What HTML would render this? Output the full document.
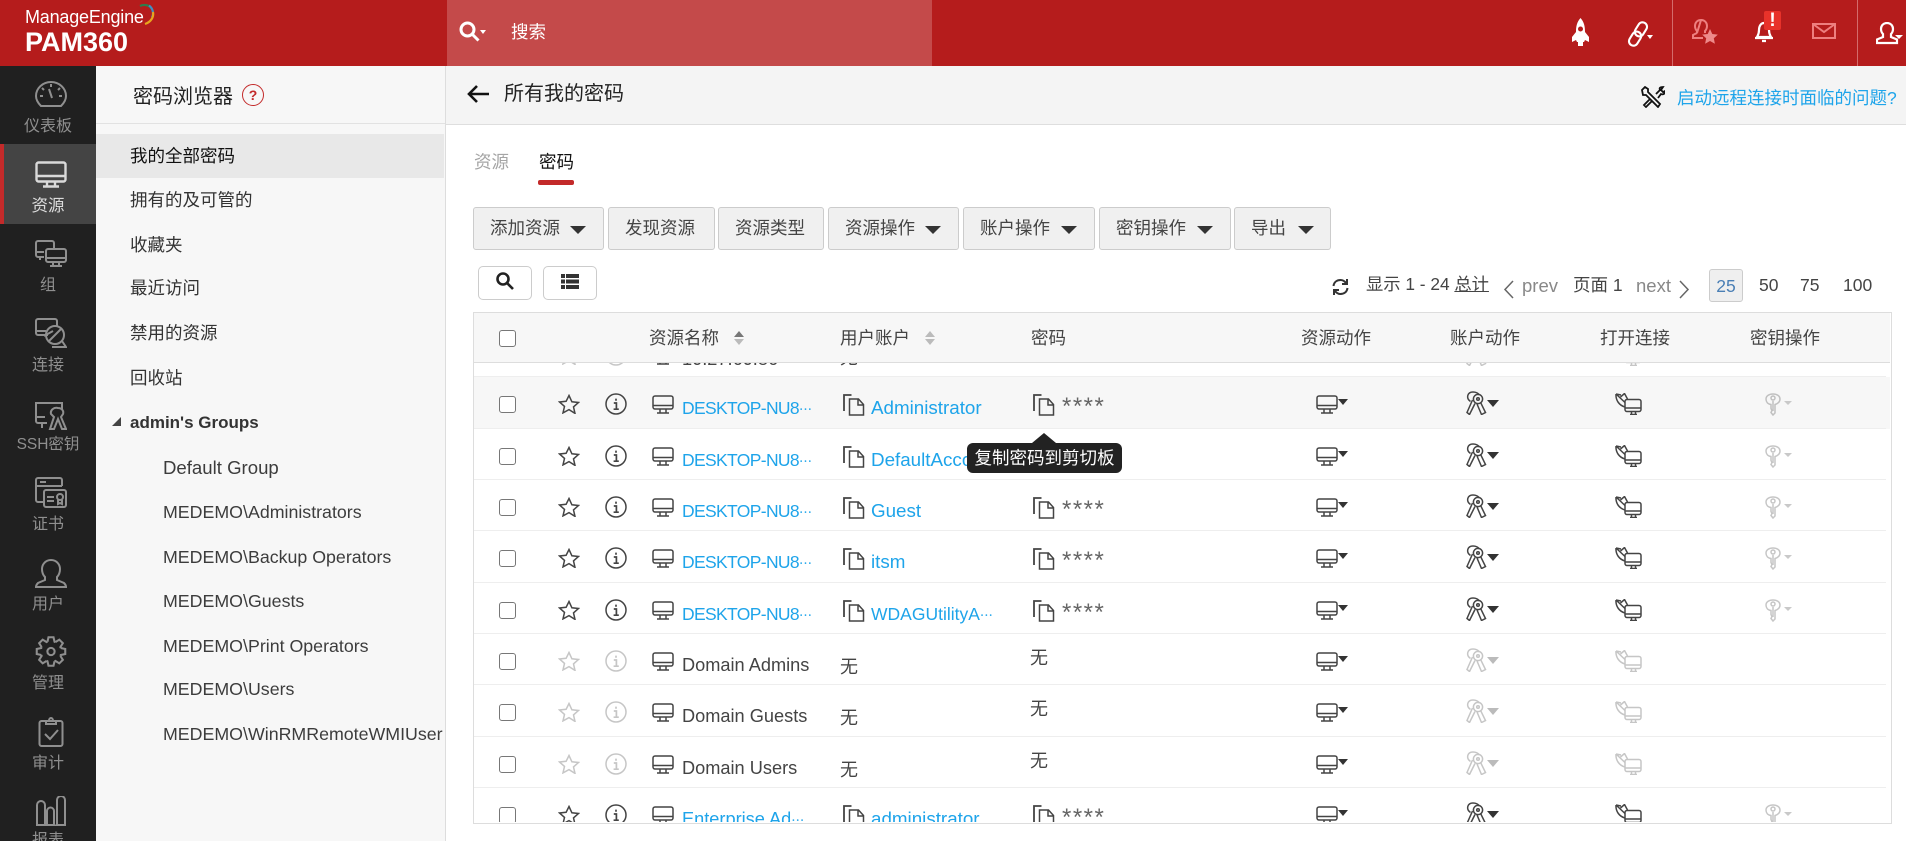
<!DOCTYPE html>
<html lang="zh"><head><meta charset="utf-8"><title>PAM360</title>
<style>
html,body{margin:0;padding:0;width:1906px;height:841px;overflow:hidden;background:#fff}
body{position:relative;font-family:"Liberation Sans","Noto Sans CJK SC",sans-serif;font-size:17.5px;color:#444}
div,span,svg,a{position:absolute;white-space:nowrap}
u,b,i,em{position:static}
.ln{line-height:24px;height:24px}
.hdr{left:0;top:0;width:1906px;height:66px;background:#b51c1c}
.nav{left:0;top:66px;width:96px;height:775px;background:#202020}
.lb{left:0;width:96px;text-align:center;font-size:16px;line-height:22px;color:#8f8f8f}
.side{left:96px;top:66px;width:349px;height:775px;background:#f7f7f7;border-right:1px solid #ddd}
.it{left:130px;color:#333;line-height:24px;height:24px}
.sub{left:163px;color:#3c3c3c;line-height:24px;height:24px;font-size:17.8px}
.btn{top:207px;height:41px;background:#f0f0f0;border:1px solid #ccc;border-radius:3px;line-height:41px;text-align:left;color:#444;box-sizing:content-box}
.btn span{left:16px;top:0}
.car{width:0;height:0;border-left:8px solid transparent;border-right:8px solid transparent;border-top:8px solid #333}
.th{top:326px;color:#444;line-height:24px;height:24px}
.r{left:0;width:1906px;height:52px}
.r:after{content:"";position:absolute;left:474px;width:1412px;top:-1px;height:1px;background:#eee}
.cb{left:499px;top:19px;width:15px;height:15px;border:1px solid #777;border-radius:3px;background:#fff}
.sr{left:558px;top:17px}.inf{left:605px;top:16px}.mon{left:652px;top:18px}
.nm{left:682px;top:19px;line-height:24px;font-size:18.2px;color:#444}
.a{color:#1ea4ea}
.dk{font-size:17.5px;letter-spacing:-.65px}
.uc{left:843px;top:17px}.pc{left:1033px;top:17px}
.un{left:871px;top:19px;line-height:24px;font-size:18.8px}
.pw{left:1062px;top:18px;line-height:24px;font-size:24px;letter-spacing:1.5px;color:#666}
.no1{left:840px;top:21px;line-height:24px;color:#444;font-size:18px}
.no2{left:1030px;top:12px;line-height:24px;color:#444;font-size:18px}
.am{left:1316px;top:18px}.ac{left:1338px;top:22px;border-left:5.5px solid transparent;border-right:5.5px solid transparent;border-top:6px solid #333;width:0;height:0}
.ak{left:1465px;top:14px}.akc{left:1487px;top:23px;border-left:6.5px solid transparent;border-right:6.5px solid transparent;border-top:7px solid #333;width:0;height:0}
.ao{left:1615px;top:16px}
.ag{left:1765px;top:16px}.agc{left:1784px;top:24px;border-left:4px solid transparent;border-right:4px solid transparent;border-top:4px solid #c9c9c9;width:0;height:0}
.g{opacity:.3}.gc{border-top-color:#bbb!important}
.dots{font-family:"Noto Sans CJK SC",sans-serif;position:static;font-size:13px;letter-spacing:0}
svg.i{fill:none;stroke:#444;stroke-width:1.5}
svg.n{fill:none;stroke:#8f8f8f;stroke-width:2}
</style></head><body>
<svg width="0" height="0" style="left:0;top:0"><defs>
<symbol id="mon" viewBox="0 0 22 19"><rect x="1" y="1" width="20" height="13" rx="2"/><path d="M1 10.500h20M8 14v3.500M14 14v3.500M5 18h12"/></symbol>
<symbol id="star" viewBox="0 0 22 20"><path d="M11 1.500l2.900 6.300 6.600.7-5 4.400 1.500 6.500L11 15.600l-6 3.300 1.500-6.500-5-4.400 6.600-.7z"/></symbol>
<symbol id="info" viewBox="0 0 22 22"><circle cx="11" cy="11" r="10"/><path d="M11 5.600v2.200M8.800 10h2.600v6M8.600 16.200h5.200" stroke-width="1.700"/></symbol>
<symbol id="copy" viewBox="0 0 22 22"><path d="M1 17V1h7.500" stroke-width="1.800"/><path d="M6.500 21V5h9l5 5.500V21zM15 5v6h5.500"/></symbol>
<symbol id="keys" viewBox="0 0 22 24"><path d="M7.500 9L2 21.500l2.500 2L10 12.500M12 13l4.500 10.500 4-2-4.800-9.800"/><circle cx="13" cy="8" r="4.600"/><circle cx="13" cy="8" r="1.300"/><path d="M5.500 10.500C.5 7 2.500 1 8 1c3 0 5 1 6.500 3"/></symbol>
<symbol id="conn" viewBox="0 0 27 22"><rect x="10" y="6.500" width="16" height="12" rx="2"/><path d="M10 15h16M15 21.500h7M16.500 18.500v3M20.500 18.500v3M1 1c-.5 6.500 3.500 11.500 9 13M1 1l9 8.500M1 1l5 1M5.500 4L9.500.5 12.500 6"/></symbol>
<symbol id="key1" viewBox="0 0 16 23"><path d="M8 22l-2-2.500 1-2-1-2V11.500C2.500 11 1 8.500 1 6c0-3 3-5 7-5s7 2 7 5c0 3-2 4.500-5 5.500V20z"/><circle cx="8" cy="5" r="2"/><path d="M8 8v10"/></symbol>
</defs></svg>

<div class="hdr"></div>
<div style="left:447px;top:0;width:485px;height:66px;background:#c44a4a"></div>
<div style="left:25px;top:5px;font-size:18px;line-height:24px;color:#fff;letter-spacing:-.2px">ManageEngine</div>
<div style="left:25px;top:26px;font-size:27px;font-weight:bold;line-height:32px;color:#fff">PAM360</div>
<svg style="left:138px;top:3px" width="18" height="24" fill="none" stroke-width="2.200"><path d="M2 3C6 1 11 2 13 5" stroke="#2f7d4a"/><path d="M11 2.500c4 3 5 8 3 12" stroke="#3f8ec4"/><path d="M15 9c1 5-2 10-8 12" stroke="#e8a51e"/></svg>

<svg style="left:459px;top:21px" width="21" height="21" fill="none" stroke="#fff" stroke-width="3"><circle cx="8.500" cy="8.500" r="6.500"/><path d="M13 13l6.500 6.500"/></svg>
<div style="left:480px;top:30px;width:0;height:0;border-left:3.500px solid transparent;border-right:3.500px solid transparent;border-top:4px solid #fff"></div>
<div class="ln" style="left:511px;top:20px;color:#fff">搜索</div>

<svg style="left:1571px;top:18px" width="19" height="28" viewBox="0 0 19 28" fill="#fff"><path d="M9.500 0C13 4 14 8 14 14l4 5v5l-4-2-1 2H6l-1-2-4 2v-5l4-5C5 8 6 4 9.500 0z"/><circle cx="9.500" cy="11" r="2.500" fill="#b51c1c"/><rect x="7" y="24" width="5" height="4"/></svg>
<svg style="left:1627px;top:21px" width="22" height="26" viewBox="0 0 22 26" fill="none" stroke="#fff" stroke-width="2.100"><g transform="rotate(32 11 13)"><rect x="6.500" y="0" width="9" height="15" rx="4.500"/><rect x="6.500" y="11" width="9" height="15" rx="4.500"/></g></svg>
<div style="left:1647px;top:35px;width:0;height:0;border-left:3.500px solid transparent;border-right:3.500px solid transparent;border-top:4px solid #fff"></div>
<div style="left:1672px;top:0;width:1px;height:66px;background:#d46b6b"></div>
<svg style="left:1692px;top:19px" width="26" height="27" viewBox="0 0 26 27" fill="none" stroke="#ee7f7f" stroke-width="2"><path d="M9 1c4 0 6 3 6 6 0 2-1 4-2 5v2M5 14v-2C4 11 3 9 3 7c0-3 2-6 6-6zM5 14l-4 2v3h10"/><path fill="#ee8a8a" stroke="none" d="M18 10l2.300 5 5.500.6-4 3.700 1.100 5.400-4.900-2.700-4.900 2.700 1.100-5.400-4-3.700 5.500-.6z"/></svg>
<svg style="left:1754px;top:18px" width="20" height="25" viewBox="0 0 20 25" fill="none" stroke="#fff" stroke-width="2.200"><path d="M3 19c1-2 2-3 2-7 0-4 2-7 5-7s5 3 5 7c0 4 1 5 2 7zM1 20h18M8 23h4"/></svg>
<div style="left:1764px;top:11px;width:17px;height:19px;background:#e8322a;border-radius:2px;color:#fff;font-weight:bold;font-size:19px;line-height:19px;text-align:center">!</div>
<svg style="left:1812px;top:23px" width="24" height="16" fill="none" stroke="#ee7f7f" stroke-width="2"><rect x="1" y="1" width="22" height="14"/><path d="M1 1l11 8 11-8"/></svg>
<div style="left:1857px;top:0;width:1px;height:66px;background:#d46b6b"></div>
<svg style="left:1876px;top:22px" width="23" height="23" viewBox="0 0 23 23" fill="none" stroke="#fff" stroke-width="2.200"><path d="M11 1c4 0 6 3 6 6 0 2-1 4-2 5v3l6 2.500V21H1v-3.500L7 15v-3C6 11 5 9 5 7c0-3 2-6 6-6z"/></svg>
<div style="left:1895px;top:35px;width:0;height:0;border-left:4px solid transparent;border-right:4px solid transparent;border-top:4px solid #fff"></div>

<div class="nav"></div>
<div style="left:0;top:144px;width:96px;height:80px;background:#444"></div>
<div style="left:0;top:144px;width:4px;height:80px;background:#c32a2a"></div>
<svg class="n" style="left:35px;top:81px" width="32" height="26" viewBox="0 0 32 26"><path d="M6 25C3 22 1 19 1 15a15 14 0 0 1 30 0c0 4-2 7-5 10z"/><path d="M14 8l3 9M16 3v3M5 15h3M24 15h3M7 7l2 2M25 7l-2 2"/></svg>
<div class="lb" style="top:116px">仪表板</div>
<svg style="left:35px;top:161px" width="32" height="27" viewBox="0 0 32 27" fill="none" stroke="#d9d9d9" stroke-width="2.400"><rect x="1.500" y="1.500" width="29" height="19" rx="2"/><path d="M1.500 15h29M12 21v4M20 21v4M8 25.500h16"/></svg>
<div class="lb" style="top:195px;color:#dcdcdc;font-size:16.500px">资源</div>
<svg class="n" style="left:35px;top:240px" width="32" height="28" viewBox="0 0 32 28"><path d="M9 17H3a2 2 0 0 1-2-2V3a2 2 0 0 1 2-2h14a2 2 0 0 1 2 2v5M1 12h8M5 17v3"/><rect x="11" y="9" width="20" height="13" rx="2"/><path d="M11 18h20M18 22v3M24 22v3M15 26h12"/></svg>
<div class="lb" style="top:275px">组</div>
<svg class="n" style="left:35px;top:318px" width="32" height="31" viewBox="0 0 32 31"><path d="M13 17H3a2 2 0 0 1-2-2V3a2 2 0 0 1 2-2h17a2 2 0 0 1 2 2v6M1 13h10"/><circle cx="20" cy="17" r="9"/><path d="M13 24l14-14M9 18l9-5M17 29h14l-4-6"/></svg>
<div class="lb" style="top:355px">连接</div>
<svg class="n" style="left:35px;top:402px" width="32" height="28" viewBox="0 0 32 28"><path d="M12 21H3a2 2 0 0 1-2-2V1h26v7M1 15h9M7 21v5"/><path d="M15 27l4-12-3-3c-1-4 3-7 7-6 4 0 6 3 5 6l-2 3 5 12h-4l-4-10-4 10z"/></svg>
<div class="lb" style="top:434px;font-size:15.500px">SSH密钥</div>
<svg class="n" style="left:35px;top:477px" width="32" height="31" viewBox="0 0 32 31"><path d="M8 25H3a2 2 0 0 1-2-2V3a2 2 0 0 1 2-2h22a2 2 0 0 1 2 2v6M1 9h26M5 5h6"/><rect x="9" y="13" width="22" height="17" rx="2"/><path d="M12 20h7M12 24h7"/><circle cx="25" cy="20" r="3"/><path d="M23 23v4l2-1 2 1v-4"/></svg>
<div class="lb" style="top:514px">证书</div>
<svg class="n" style="left:35px;top:559px" width="32" height="29" viewBox="0 0 32 29"><path d="M16 1c6 0 9 5 9 9 0 3-1 6-3 8v3l7 3c1 1 2 2 2 4H1c0-2 1-3 2-4l7-3v-3c-2-2-3-5-3-8 0-4 3-9 9-9z"/></svg>
<div class="lb" style="top:594px">用户</div>
<svg class="n" style="left:35px;top:636px" width="32" height="31" viewBox="0 0 30 30"><circle cx="15" cy="15" r="3.500"/><g transform="translate(15 15)"><path id="t" d="M-3.420-9.400L-2.430-13.790 2.430-13.790 3.420-9.400 4.230-9.060"/><use href="#t" transform="rotate(45)"/><use href="#t" transform="rotate(90)"/><use href="#t" transform="rotate(135)"/><use href="#t" transform="rotate(180)"/><use href="#t" transform="rotate(225)"/><use href="#t" transform="rotate(270)"/><use href="#t" transform="rotate(315)"/></g></svg>
<div class="lb" style="top:673px">管理</div>
<svg class="n" style="left:38px;top:716px" width="26" height="31" viewBox="0 0 26 31"><rect x="1.500" y="5" width="23" height="25" rx="2"/><path d="M8 8V5h3c0-4 4-4 4 0h3v3zM7 18l5 5 8-9"/></svg>
<div class="lb" style="top:753px">审计</div>
<svg class="n" style="left:36px;top:796px" width="30" height="30" viewBox="0 0 30 30"><path d="M1 29V9a3.500 3.500 0 0 1 8 0v20zM11 29V15a3.500 3.500 0 0 1 7 0v14zM21 29V4a3.500 3.500 0 0 1 8 0v25zM0 29.500h30"/></svg>
<div class="lb" style="top:830px">报表</div>

<div class="side"></div>
<div style="left:96px;top:123px;width:349px;height:1px;background:#e2e2e2"></div>
<div style="left:133px;top:84px;font-size:20px;line-height:26px;color:#222">密码浏览器</div>
<div style="left:242px;top:84px;width:20px;height:20px;border:1.500px solid #c32a2a;border-radius:50%;color:#c32a2a;font-weight:bold;font-size:14px;line-height:20px;text-align:center">?</div>
<div style="left:96px;top:134px;width:348px;height:44px;background:#e8e8e8"></div>
<div class="it" style="top:144px;color:#111">我的全部密码</div>
<div class="it" style="top:188px">拥有的及可管的</div>
<div class="it" style="top:233px">收藏夹</div>
<div class="it" style="top:276px">最近访问</div>
<div class="it" style="top:321px">禁用的资源</div>
<div class="it" style="top:366px">回收站</div>
<div style="left:112px;top:417px;width:0;height:0;border-left:9px solid transparent;border-bottom:9px solid #444"></div>
<div class="it" style="top:411px;font-weight:bold;font-size:17px">admin's Groups</div>
<div class="sub" style="top:456px;font-size:18.600px">Default Group</div>
<div class="sub" style="top:500px">MEDEMO\Administrators</div>
<div class="sub" style="top:545px">MEDEMO\Backup Operators</div>
<div class="sub" style="top:589px">MEDEMO\Guests</div>
<div class="sub" style="top:634px">MEDEMO\Print Operators</div>
<div class="sub" style="top:677px">MEDEMO\Users</div>
<div class="sub" style="top:722px">MEDEMO\WinRMRemoteWMIUser</div>

<div style="left:446px;top:66px;width:1460px;height:58px;background:#f4f4f4;border-bottom:1px solid #dedede"></div>
<svg style="left:467px;top:84px" width="23" height="20" fill="none" stroke="#111" stroke-width="2.600"><path d="M22 10H2M10 2l-8 8 8 8"/></svg>
<div style="left:504px;top:81px;font-size:20px;line-height:26px;color:#222">所有我的密码</div>
<svg style="left:1641px;top:86px" width="24" height="22" viewBox="0 0 24 22" fill="none" stroke="#111" stroke-width="1.800"><path d="M1 4l3-3 3 2v3l12 12-2 3L5 9H2zM15 8l4-4c-1-2 0-3 3-3l-2 3 2 2 2-1c0 3-2 4-4 3l-3 4M9 13l-6 6 2 2 6-6"/></svg>
<div class="ln" style="left:1677px;top:86px;color:#1ea4ea">启动远程连接时面临的问题?</div>

<div class="ln" style="left:474px;top:150px;color:#a5a5a5">资源</div>
<div class="ln" style="left:539px;top:150px;color:#111">密码</div>
<div style="left:538px;top:180px;width:36px;height:5px;background:#c32a2a;border-radius:2px"></div>

<div class="btn" style="left:473px;width:129px"><span>添加资源</span><div class="car" style="left:96px;top:18px"></div></div>
<div class="btn" style="left:608px;width:105px"><span>发现资源</span></div>
<div class="btn" style="left:718px;width:104px"><span>资源类型</span></div>
<div class="btn" style="left:828px;width:129px"><span>资源操作</span><div class="car" style="left:96px;top:18px"></div></div>
<div class="btn" style="left:963px;width:130px"><span>账户操作</span><div class="car" style="left:97px;top:18px"></div></div>
<div class="btn" style="left:1099px;width:130px"><span>密钥操作</span><div class="car" style="left:97px;top:18px"></div></div>
<div class="btn" style="left:1234px;width:95px"><span>导出</span><div class="car" style="left:63px;top:18px"></div></div>

<div style="left:478px;top:266px;width:52px;height:32px;border:1px solid #ccc;border-radius:5px;background:#fff"></div>
<svg style="left:496px;top:272px" width="18" height="18" fill="none" stroke="#222" stroke-width="2.600"><circle cx="7" cy="7" r="5.500"/><path d="M11 11l6 6"/></svg>
<div style="left:543px;top:266px;width:52px;height:32px;border:1px solid #ccc;border-radius:5px;background:#fff"></div>
<svg style="left:561px;top:274px" width="18" height="15" fill="#333"><rect width="4" height="4"/><rect x="5" width="13" height="4"/><rect y="5.500" width="4" height="4"/><rect x="5" y="5.500" width="13" height="4"/><rect y="11" width="4" height="4"/><rect x="5" y="11" width="13" height="4"/></svg>

<svg style="left:1332px;top:278px" width="17" height="18" viewBox="0 0 17 18" fill="none" stroke="#333" stroke-width="2"><path d="M1.500 8C2 4 5 2 8.500 2c2.500 0 4 1 5.500 3M15.500 10c-.5 4-3.500 6-7 6-2.500 0-4-1-5.500-3M15 1v5h-5M2 17v-5h5"/></svg>
<div class="ln" style="left:1366px;top:272px;color:#444;font-size:17.3px">显示 1 - 24 <u>总计</u></div>
<svg style="left:1503px;top:280px" width="11" height="19" fill="none" stroke="#666" stroke-width="1.500"><path d="M10 1L2 9.500 10 18"/></svg>
<div class="ln" style="left:1522px;top:274px;color:#888;font-size:18.5px">prev</div>
<div class="ln" style="left:1573px;top:273px;color:#444">页面 1</div>
<div class="ln" style="left:1636px;top:274px;color:#888;font-size:18.5px">next</div>
<svg style="left:1679px;top:280px" width="11" height="19" fill="none" stroke="#666" stroke-width="1.500"><path d="M1 1l8 8.500L1 18"/></svg>
<div style="left:1709px;top:269px;width:32px;height:31px;border:1px solid #ccc;border-radius:3px;background:#efefef;color:#4a7fb5;line-height:33px;text-align:center">25</div>
<div class="ln" style="left:1759px;top:273px">50</div>
<div class="ln" style="left:1800px;top:273px">75</div>
<div class="ln" style="left:1843px;top:273px">100</div>

<div style="left:473px;top:312px;width:1417px;height:510px;border:1px solid #ddd;background:#fff"></div>
<div style="left:474px;top:313px;width:1416px;height:49px;background:#f7f7f7;border-bottom:1px solid #ddd"></div>
<div class="cb" style="top:330px"></div>
<div class="th" style="left:649px">资源名称</div>
<div style="left:734px;top:331px;border-left:5px solid transparent;border-right:5px solid transparent;border-bottom:6px solid #777;width:0;height:0"></div>
<div style="left:734px;top:339px;border-left:5px solid transparent;border-right:5px solid transparent;border-top:6px solid #bbb;width:0;height:0"></div>
<div class="th" style="left:840px">用户账户</div>
<div style="left:925px;top:331px;border-left:5px solid transparent;border-right:5px solid transparent;border-bottom:6px solid #bbb;width:0;height:0"></div>
<div style="left:925px;top:339px;border-left:5px solid transparent;border-right:5px solid transparent;border-top:6px solid #bbb;width:0;height:0"></div>
<div class="th" style="left:1031px">密码</div>
<div class="th" style="left:1301px">资源动作</div>
<div class="th" style="left:1450px">账户动作</div>
<div class="th" style="left:1600px">打开连接</div>
<div class="th" style="left:1750px">密钥操作</div>

<div style="left:0;top:0;width:1906px;height:841px;clip-path:inset(363px 16px 19px 474px)">

<div class="r" style="top:328px"><svg class="i sr g" width="22" height="20"><use href="#star"/></svg><svg class="i inf g" width="22" height="22"><use href="#info"/></svg><svg class="i mon" width="22" height="19"><use href="#mon"/></svg><div class="nm">10.27.60.86</div><div class="no1" style="top:18px">无</div><svg class="i ak g" width="22" height="24"><use href="#keys"/></svg><svg class="i ao g" width="27" height="22"><use href="#conn"/></svg></div>

<div class="r" style="top:377px"><div style="left:474px;top:0;width:1416px;height:52px;background:#f7f7f7"></div><div class="cb"></div><svg class="i sr" width="22" height="20"><use href="#star"/></svg><svg class="i inf" width="22" height="22"><use href="#info"/></svg><svg class="i mon" width="22" height="19"><use href="#mon"/></svg><div class="nm a dk">DESKTOP-NU8<span class="dots">…</span></div><svg class="i uc" width="22" height="22"><use href="#copy"/></svg><div class="un a">Administrator</div><svg class="i pc" width="22" height="22"><use href="#copy"/></svg><div class="pw">****</div><svg class="i am" width="22" height="19"><use href="#mon"/></svg><div class="ac"></div><svg class="i ak" width="22" height="24"><use href="#keys"/></svg><div class="akc"></div><svg class="i ao" width="27" height="22"><use href="#conn"/></svg><svg class="i ag g" width="16" height="23"><use href="#key1"/></svg><div class="agc"></div></div>

<div class="r" style="top:429px"><div class="cb"></div><svg class="i sr" width="22" height="20"><use href="#star"/></svg><svg class="i inf" width="22" height="22"><use href="#info"/></svg><svg class="i mon" width="22" height="19"><use href="#mon"/></svg><div class="nm a dk">DESKTOP-NU8<span class="dots">…</span></div><svg class="i uc" width="22" height="22"><use href="#copy"/></svg><div class="un a">DefaultAccount</div><svg class="i am" width="22" height="19"><use href="#mon"/></svg><div class="ac"></div><svg class="i ak" width="22" height="24"><use href="#keys"/></svg><div class="akc"></div><svg class="i ao" width="27" height="22"><use href="#conn"/></svg><svg class="i ag g" width="16" height="23"><use href="#key1"/></svg><div class="agc"></div></div>

<div class="r" style="top:480px"><div class="cb"></div><svg class="i sr" width="22" height="20"><use href="#star"/></svg><svg class="i inf" width="22" height="22"><use href="#info"/></svg><svg class="i mon" width="22" height="19"><use href="#mon"/></svg><div class="nm a dk">DESKTOP-NU8<span class="dots">…</span></div><svg class="i uc" width="22" height="22"><use href="#copy"/></svg><div class="un a">Guest</div><svg class="i pc" width="22" height="22"><use href="#copy"/></svg><div class="pw">****</div><svg class="i am" width="22" height="19"><use href="#mon"/></svg><div class="ac"></div><svg class="i ak" width="22" height="24"><use href="#keys"/></svg><div class="akc"></div><svg class="i ao" width="27" height="22"><use href="#conn"/></svg><svg class="i ag g" width="16" height="23"><use href="#key1"/></svg><div class="agc"></div></div>

<div class="r" style="top:531px"><div class="cb"></div><svg class="i sr" width="22" height="20"><use href="#star"/></svg><svg class="i inf" width="22" height="22"><use href="#info"/></svg><svg class="i mon" width="22" height="19"><use href="#mon"/></svg><div class="nm a dk">DESKTOP-NU8<span class="dots">…</span></div><svg class="i uc" width="22" height="22"><use href="#copy"/></svg><div class="un a">itsm</div><svg class="i pc" width="22" height="22"><use href="#copy"/></svg><div class="pw">****</div><svg class="i am" width="22" height="19"><use href="#mon"/></svg><div class="ac"></div><svg class="i ak" width="22" height="24"><use href="#keys"/></svg><div class="akc"></div><svg class="i ao" width="27" height="22"><use href="#conn"/></svg><svg class="i ag g" width="16" height="23"><use href="#key1"/></svg><div class="agc"></div></div>

<div class="r" style="top:583px"><div class="cb"></div><svg class="i sr" width="22" height="20"><use href="#star"/></svg><svg class="i inf" width="22" height="22"><use href="#info"/></svg><svg class="i mon" width="22" height="19"><use href="#mon"/></svg><div class="nm a dk">DESKTOP-NU8<span class="dots">…</span></div><svg class="i uc" width="22" height="22"><use href="#copy"/></svg><div class="un a" style="font-size:17.500px">WDAGUtilityA<span class="dots">…</span></div><svg class="i pc" width="22" height="22"><use href="#copy"/></svg><div class="pw">****</div><svg class="i am" width="22" height="19"><use href="#mon"/></svg><div class="ac"></div><svg class="i ak" width="22" height="24"><use href="#keys"/></svg><div class="akc"></div><svg class="i ao" width="27" height="22"><use href="#conn"/></svg><svg class="i ag g" width="16" height="23"><use href="#key1"/></svg><div class="agc"></div></div>

<div class="r" style="top:634px"><div class="cb"></div><svg class="i sr g" width="22" height="20"><use href="#star"/></svg><svg class="i inf g" width="22" height="22"><use href="#info"/></svg><svg class="i mon" width="22" height="19"><use href="#mon"/></svg><div class="nm">Domain Admins</div><div class="no1">无</div><div class="no2">无</div><svg class="i am" width="22" height="19"><use href="#mon"/></svg><div class="ac"></div><svg class="i ak g" width="22" height="24"><use href="#keys"/></svg><div class="akc gc"></div><svg class="i ao g" width="27" height="22"><use href="#conn"/></svg></div>

<div class="r" style="top:685px"><div class="cb"></div><svg class="i sr g" width="22" height="20"><use href="#star"/></svg><svg class="i inf g" width="22" height="22"><use href="#info"/></svg><svg class="i mon" width="22" height="19"><use href="#mon"/></svg><div class="nm">Domain Guests</div><div class="no1">无</div><div class="no2">无</div><svg class="i am" width="22" height="19"><use href="#mon"/></svg><div class="ac"></div><svg class="i ak g" width="22" height="24"><use href="#keys"/></svg><div class="akc gc"></div><svg class="i ao g" width="27" height="22"><use href="#conn"/></svg></div>

<div class="r" style="top:737px"><div class="cb"></div><svg class="i sr g" width="22" height="20"><use href="#star"/></svg><svg class="i inf g" width="22" height="22"><use href="#info"/></svg><svg class="i mon" width="22" height="19"><use href="#mon"/></svg><div class="nm">Domain Users</div><div class="no1">无</div><div class="no2">无</div><svg class="i am" width="22" height="19"><use href="#mon"/></svg><div class="ac"></div><svg class="i ak g" width="22" height="24"><use href="#keys"/></svg><div class="akc gc"></div><svg class="i ao g" width="27" height="22"><use href="#conn"/></svg></div>

<div class="r" style="top:788px"><div class="cb"></div><svg class="i sr" width="22" height="20"><use href="#star"/></svg><svg class="i inf" width="22" height="22"><use href="#info"/></svg><svg class="i mon" width="22" height="19"><use href="#mon"/></svg><div class="nm a">Enterprise Ad<span class="dots">…</span></div><svg class="i uc" width="22" height="22"><use href="#copy"/></svg><div class="un a">administrator</div><svg class="i pc" width="22" height="22"><use href="#copy"/></svg><div class="pw">****</div><svg class="i am" width="22" height="19"><use href="#mon"/></svg><div class="ac"></div><svg class="i ak" width="22" height="24"><use href="#keys"/></svg><div class="akc"></div><svg class="i ao" width="27" height="22"><use href="#conn"/></svg><svg class="i ag g" width="16" height="23"><use href="#key1"/></svg><div class="agc"></div></div>
</div>

<div style="left:967px;top:443px;width:155px;height:30px;background:#222;border-radius:6px;color:#fff;line-height:30px;text-align:center">复制密码到剪切板</div>
<div style="left:1032px;top:433px;width:0;height:0;border-left:12px solid transparent;border-right:12px solid transparent;border-bottom:10px solid #222"></div>
</body></html>
